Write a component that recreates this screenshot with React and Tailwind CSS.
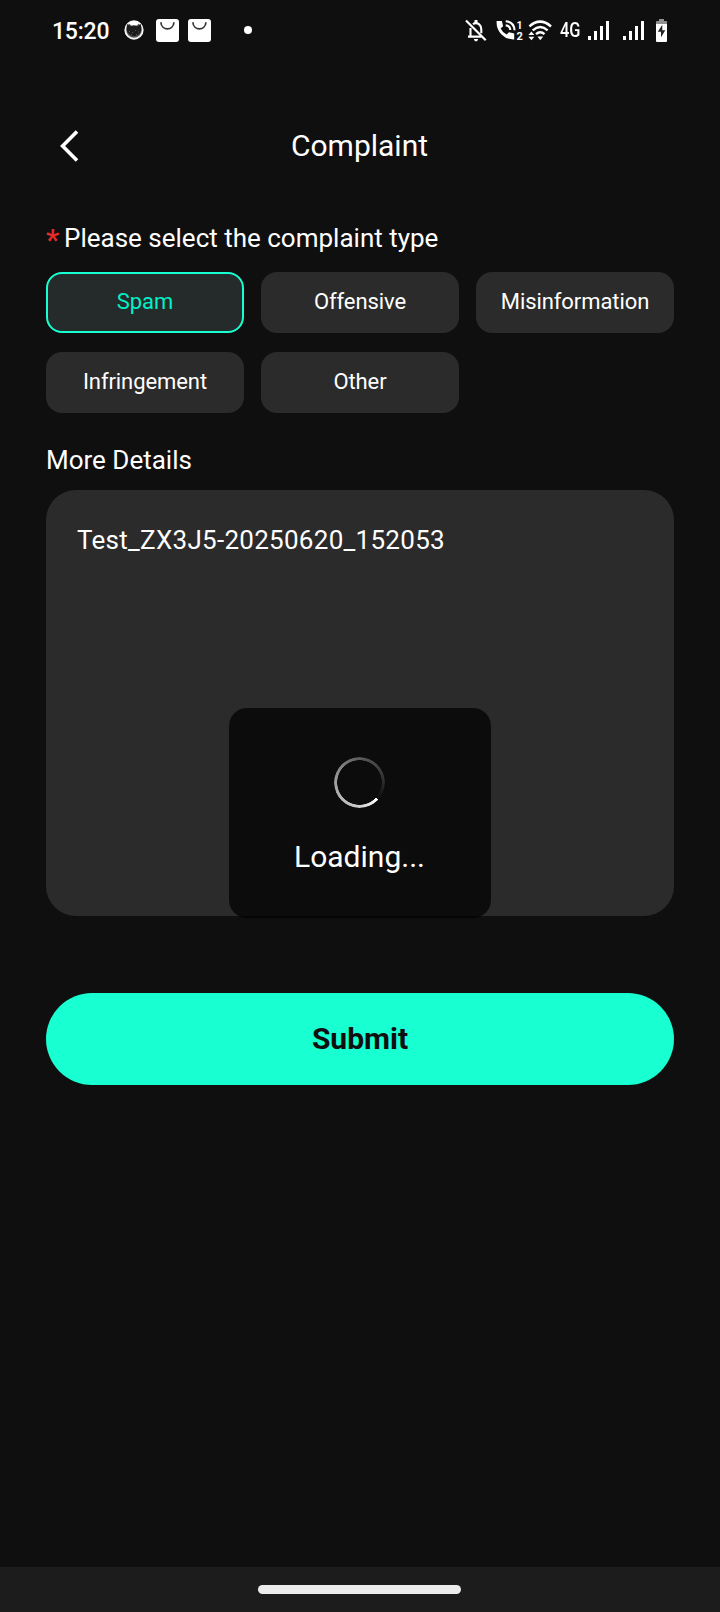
import React from "react";

const complaintTypes = ["Spam", "Offensive", "Misinformation", "Infringement", "Other"];

function CatIcon() {
  return (
    <svg width="20" height="20" viewBox="0 0 20 20" className="ml-[14px]">
      <circle cx="10" cy="10" r="8.7" fill="#5a5a5a" stroke="#f4f4f4" strokeWidth="1.9" />
      <path d="M4.6 2.6 Q10 .2 15.4 2.6 L13 5.6 Q10 4.9 7 5.6 Z" fill="#fff" />
      <path d="M3.3 4 L6.8 6.2 Q10 5.5 13.2 6.2 L16.7 4 Q18.2 9.5 16.2 12.8 Q13.5 16.2 10 16.2 Q6.5 16.2 3.8 12.8 Q1.8 9.5 3.3 4Z" fill="#1c1c1c" />
      <path d="M5 11.5h1M8 12.5h1M11 10.5h1M14 12h1M7 14.5h1M12 14.5h1" stroke="#555" />
    </svg>
  );
}

function BagIcon({ className }) {
  return (
    <svg width="23" height="23" viewBox="0 0 23 23" className={className}>
      <rect width="23" height="23" rx="3" fill="#fff" />
      <path d="M4.9 3.2 C5.2 12 17.6 12 17.9 3.2" fill="none" stroke="#333" strokeWidth="1.7" />
    </svg>
  );
}

function BellOffIcon() {
  return (
    <svg width="22" height="23" viewBox="0 0 22 23" fill="none" stroke="#fff" className="ml-auto">
      <path d="M5.5 9 V17 M3 17.6 H16.5 M8 5.2 Q11 3 14.2 5.4 Q16.3 7.2 16.3 10.5 V14.2" strokeWidth="2.1" />
      <path d="M11 4 V1" strokeWidth="3" />
      <path d="M8.8 20 H13.2 Q12.8 22.4 11 22.4 Q9.2 22.4 8.8 20Z" fill="#fff" stroke="none" />
      <path d="M1 1.5 L20.7 21.2" strokeWidth="2.2" />
    </svg>
  );
}

function CallIcon() {
  return (
    <svg width="27" height="23" viewBox="0 0 27 23" className="mr-[1px] ml-[9px]">
      <path d="M.6 2 H5.9 L7.1 7.2 L4.6 9.6 Q6.7 13.7 10.6 15.6 L13 13.2 L18.2 14.4 V20.4 Q10.5 20.7 5.5 15.5 Q.1 10 .6 2Z" fill="#fff" />
      <path d="M9.7 6.4 Q13.9 6.6 14.3 11 M9.7 2.2 Q18 2.9 18.5 11.2" fill="none" stroke="#fff" strokeWidth="2.1" />
      <text x="20.6" y="9.6" fontFamily="Roboto" fontWeight="700" fontSize="10.5" fill="#fff">1</text>
      <text x="20.4" y="21" fontFamily="Roboto" fontWeight="700" fontSize="11" fill="#fff">2</text>
    </svg>
  );
}

function WifiIcon() {
  return (
    <svg width="25" height="21" viewBox="0 0 25 21" fill="none" stroke="#fff" className="ml-[4px]">
      <path d="M1.4 6.4 Q12 -3 23 6.4" strokeWidth="2.6" />
      <path d="M4.7 10.4 Q12.3 3.8 19.7 10.4" strokeWidth="2.4" />
      <path d="M8 14.2 Q12.3 10.5 16.5 14.2" strokeWidth="2.4" />
      <path d="M9.4 16.6 H15.2 L12.3 20.2Z M.4 15 L3.4 11.6 L6.4 15Z M.4 16.8 H6.4 L3.4 20.2Z" fill="#fff" stroke="none" />
    </svg>
  );
}

function SignalIcon({ className }) {
  return (
    <svg width="21" height="19" viewBox="0 0 21 19" fill="#fff" className={className}>
      <path d="M0 15h3v4H0z M6 10h3v9H6z M12 5h3v14h-3z M18 0h3v19h-3z" />
    </svg>
  );
}

function BatteryIcon() {
  return (
    <svg width="11" height="23" viewBox="0 0 11 23" className="ml-[12px]">
      <path d="M0 5 V3 Q0 2 1 2 H3 V0 H8 V2 H10 Q11 2 11 3 V5Z" fill="#909090" />
      <path d="M0 5 H11 V22 Q11 23 10 23 H1 Q0 23 0 22Z" fill="#fff" />
      <path d="M6.3 5.8 L1.8 12.7 H5 V18.3 L9.3 11.2 H6.3Z" fill="#222" />
    </svg>
  );
}

function StatusBar() {
  return (
    <div className="flex h-[60px] items-center pr-[53px] pl-[52px]">
      <span className="w-[58px] pt-[2px] text-[23px] leading-none font-medium tracking-[-0.2px]">15:20</span>
      <CatIcon />
      <BagIcon className="ml-[12px]" />
      <BagIcon className="ml-[9px]" />
      <span className="ml-[33px] size-2 rounded-full bg-white" />
      <BellOffIcon />
      <CallIcon />
      <WifiIcon />
      <span className="ml-[7px] w-[21px] origin-left scale-x-[0.82] text-[20px] leading-none font-medium whitespace-nowrap">4G</span>
      <SignalIcon className="ml-[7px]" />
      <SignalIcon className="ml-[14px]" />
      <BatteryIcon />
    </div>
  );
}

export default function App() {
  return (
    <div className="relative flex h-[1612px] w-[720px] flex-col overflow-hidden bg-[#0f0f0f] font-['Roboto',sans-serif] text-white">
      <StatusBar />

      <header className="mt-[50px] grid h-[72px] grid-cols-[1fr_auto_1fr] items-center pr-[47px] pl-[46px]">
        <button aria-label="Back" className="justify-self-start pl-[13px]">
          <svg width="21" height="34" viewBox="0 0 21 34" fill="none" stroke="#fff" strokeWidth="3.6">
            <path d="M18 2.4 L3.6 17 L18 31.6" />
          </svg>
        </button>
        <h1 className="text-[30px] leading-[36px]">Complaint</h1>
      </header>

      <main className="flex flex-col px-[46px]">
        <h2 className="mt-[40px] flex h-[32px] items-center text-[26px] leading-[32px]">
          <span className="w-[18px] pt-[3px] text-[30px] font-medium text-[#e52b2b]">*</span>
          Please select the complaint type
        </h2>

        <div className="mt-[18px] grid grid-cols-3 gap-x-[17px] gap-y-[19px]">
          {complaintTypes.map((type, i) => (
            <button
              key={type}
              className={
                i === 0
                  ? "h-[61px] rounded-[16px] border-2 border-[#18ffd1] bg-[#252a2a] pb-[2px] text-[22px] tracking-[-0.08px] text-[#00f0c8]"
                  : "h-[61px] rounded-[16px] bg-[#2b2b2b] pb-[2px] text-[22px] tracking-[-0.08px]"
              }
            >
              {type}
            </button>
          ))}
        </div>

        <h2 className="mt-[31px] h-[32px] text-[26px] leading-[32px]">More Details</h2>
        <div className="mt-[14px] h-[426px] rounded-[30px] bg-[#2b2b2b] px-[31px] pt-[34px] text-[26px] leading-[32px] tracking-[0.28px]">
          Test_ZX3J5-20250620_152053
        </div>

        <button className="mt-[77px] h-[92px] rounded-full bg-[#18ffd1] pb-[2px] text-[30px] font-bold text-[#0f0f0f]">
          Submit
        </button>
      </main>

      <footer className="mt-auto flex h-[45px] justify-center bg-[#1c1c1d] pt-[18px] pr-[1px]">
        <span className="h-[9px] w-[203px] rounded-full bg-[#ececec]" />
      </footer>

      <div className="absolute top-[708px] left-[229px] flex h-[210px] w-[262px] flex-col items-center rounded-[18px] bg-black/70">
        <div className="mt-[49px] mr-[1px] size-[51px] rounded-full bg-[conic-gradient(from_133deg,#ffffff_0deg,#d0d0d0_45deg,#a0a0a0_135deg,#5c5c5c_225deg,#303030_310deg,#0c0c0c_360deg)] [mask-image:radial-gradient(circle_closest-side_at_center,transparent_22px,black_22.6px)]" />
        <p className="mt-[31px] pr-[1px] text-[30px] leading-[36px]">Loading...</p>
      </div>
    </div>
  );
}
